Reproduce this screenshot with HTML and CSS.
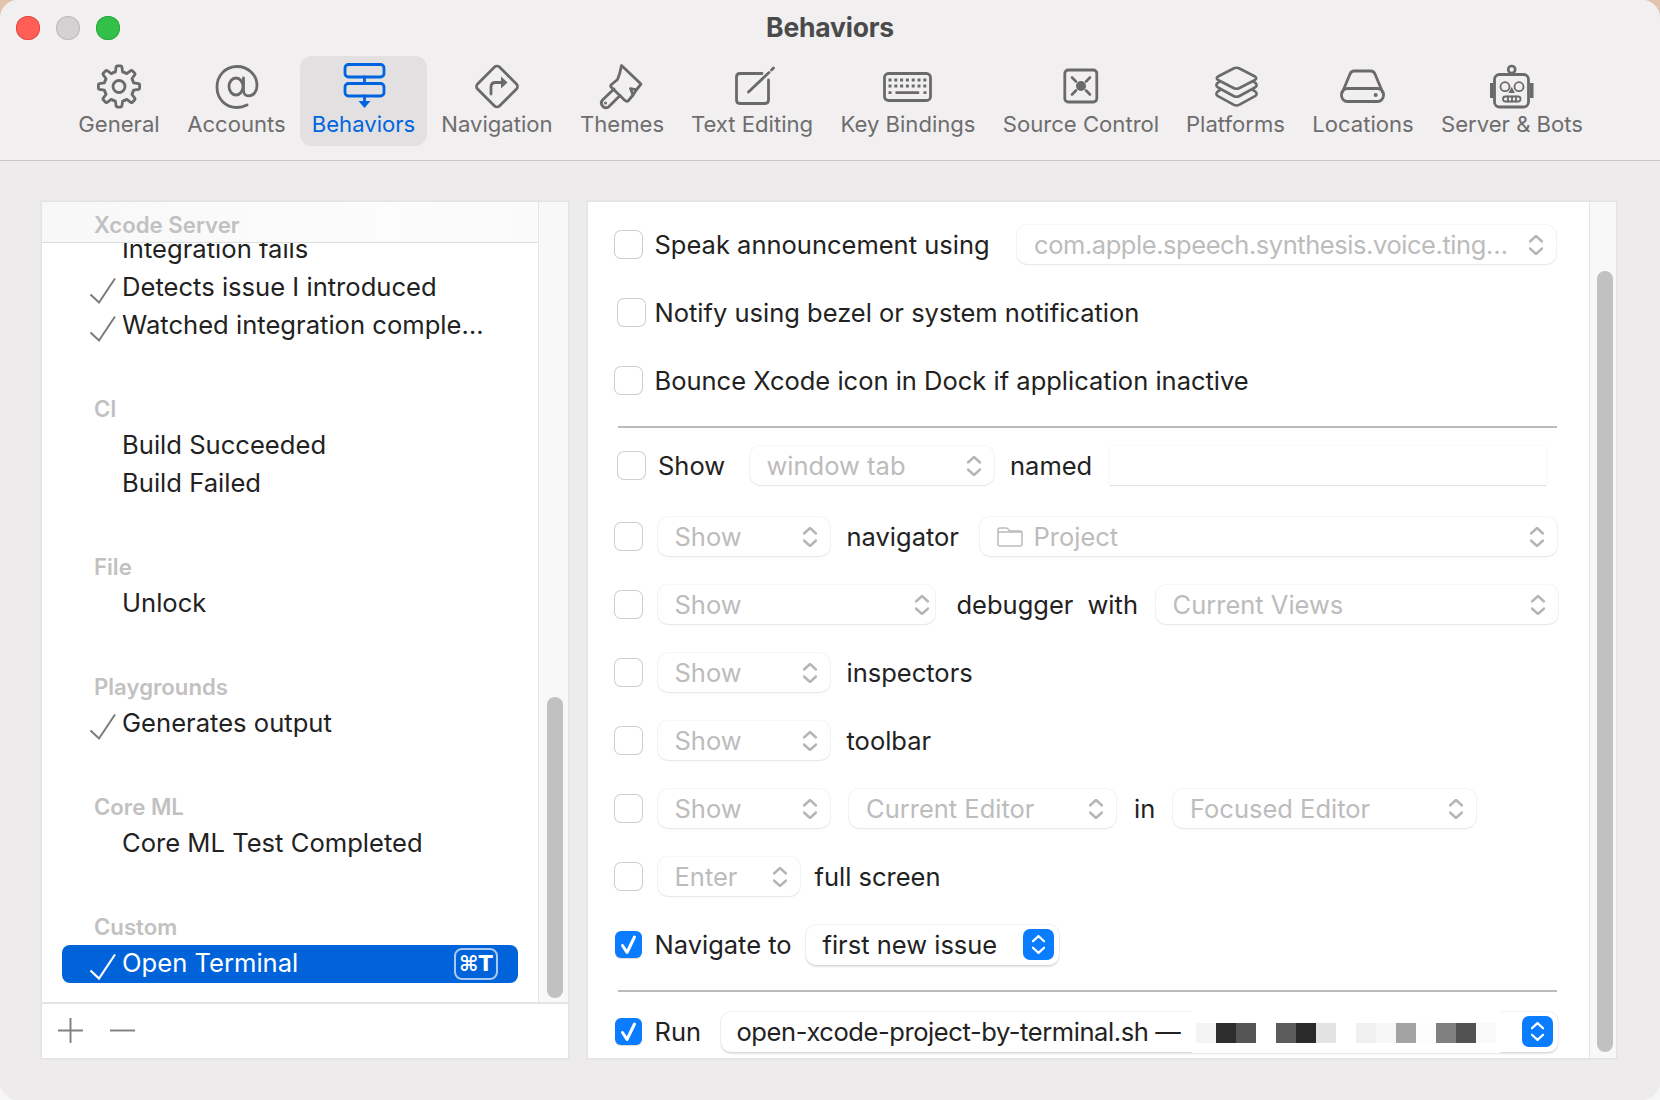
FILE: index.html
```html
<!DOCTYPE html>
<html lang="en">
<head>
<meta charset="utf-8">
<title>Behaviors</title>
<link rel="stylesheet" href="styles.css">
</head>
<body>
<svg class="defs" width="0" height="0" aria-hidden="true">
  <defs>
    <path id="tooth" d="M-5.74-13.86-3.6-14.6-2.9-19.6Q-2.7-20.6-1.7-20.6H1.7Q2.7-20.6 2.9-19.6L3.6-14.6 5.74-13.86"/>
    <path id="updown" d="M1 6.5 7 1l6 5.5M1 13.5 7 19l6-5.5"/>
    <path id="tick" d="M1.5 17.5 10 25.5 26 1.5"/>
    <path id="boxtick" d="M7.5 14.5 12 21.5 19.5 6"/>
  </defs>
</svg>
<div class="window">
  <header class="titlebar">
    <div class="lights"><span class="light red"></span><span class="light grey"></span><span class="light green"></span></div>
    <h1 class="title">Behaviors</h1>
    <div></div>
  </header>
  <nav class="toolbar">
    <a class="tool">
      <svg class="ticon" viewBox="0 0 60 50"><g transform="translate(30 24.5)"><use href="#tooth"/><use href="#tooth" transform="rotate(45)"/><use href="#tooth" transform="rotate(90)"/><use href="#tooth" transform="rotate(135)"/><use href="#tooth" transform="rotate(180)"/><use href="#tooth" transform="rotate(225)"/><use href="#tooth" transform="rotate(270)"/><use href="#tooth" transform="rotate(315)"/><circle r="6"/></g></svg>
      <span>General</span>
    </a>
    <a class="tool">
      <svg class="ticon" viewBox="0 0 60 50"><ellipse cx="29" cy="24.5" rx="7" ry="8.5"/><path d="M36.500 16v12.500c0 3.200 2 5.300 5 5.300 5 0 8.500-4 8.500-10.300C50 13 41 4.500 30 4.500 18 4.500 10 14 10 25c0 12 8.500 20.500 20 20.500 4 0 7-1 10-2.500"/></svg>
      <span>Accounts</span>
    </a>
    <a class="tool active">
      <svg class="ticon" viewBox="0 0 60 50"><rect x="11" y="2.500" width="39" height="12.500" rx="3.500"/><rect x="11" y="21.500" width="39" height="12.500" rx="3.500"/><path d="M30.500 15v6.500M30.500 34v5"/><path class="fill" d="M24.500 39h12l-6 7z"/></svg>
      <span>Behaviors</span>
    </a>
    <a class="tool">
      <svg class="ticon" viewBox="0 0 60 50"><rect x="14.500" y="9" width="31" height="31" rx="3.500" transform="rotate(45 30 24.500)"/><path d="M24 32v-7q0-4.500 4.500-4.500H35"/><path class="fill" d="M34 14.500 40.500 20.500 34 26.500z"/></svg>
      <span>Navigation</span>
    </a>
    <a class="tool">
      <svg class="ticon" viewBox="0 0 60 50"><path d="M29.500 3.500Q28 12 25.500 17.500L19.500 22.500Q18 24 19.500 25.500L33 38.500Q35 40 36.500 38.500L41 33Q44 28 49 22Z"/><path d="M22 27 10.500 38Q8 41 10.500 44 13 47 16.500 45L28 33.500"/><path d="M41 33 38.500 26.500 43.500 27.500"/><circle class="fill" cx="13.500" cy="41" r="1.500"/></svg>
      <span>Themes</span>
    </a>
    <a class="tool">
      <svg class="ticon" viewBox="0 0 60 50"><path d="M40 11.500H18q-3.500 0-3.500 3.500v23q0 3.500 3.500 3.500h25q3.500 0 3.500-3.500V18"/><path d="M26.500 30 47 10.500M49.500 8l2-2"/></svg>
      <span>Text Editing</span>
    </a>
    <a class="tool">
      <svg class="ticon" viewBox="0 0 60 50"><rect x="6.500" y="11.500" width="46" height="27" rx="4"/><path class="dash" d="M10.500 18H49M10.500 24H49"/><path class="dash" d="M10.500 30.700h3M45.500 30.700h3"/><path d="M18.700 30.700H40"/></svg>
      <span>Key Bindings</span>
    </a>
    <a class="tool">
      <svg class="ticon" viewBox="0 0 60 50"><rect x="13.800" y="8" width="32" height="32" rx="3.500"/><circle class="fill" cx="30" cy="24" r="5"/><path class="thin" d="M21 15.500l4 4M39 15.500l-4 4M21 32.500l4-4M39 32.500l-4-4"/></svg>
      <span>Source Control</span>
    </a>
    <a class="tool">
      <svg class="ticon" viewBox="0 0 60 50"><path class="thin" d="M27.500 6.500Q30.500 5 33.500 6.500L49 14.500Q51.500 16.300 49 18L33.500 26Q30.500 27.500 27.500 26L12 18Q9.500 16.300 12 14.500Z"/><path class="thin" d="M14 19.500 11.500 21Q9 23.500 12 25.500L27.500 34Q30.500 35.500 33.500 34L49 25.500Q52 23.500 49.500 21L47 19.500"/><path class="thin" d="M14 28.200 11.500 29.700Q9 32.200 12 34.200L27.500 42.700Q30.500 44.200 33.500 42.700L49 34.200Q52 32.200 49.500 29.700L47 28.200"/></svg>
      <span>Platforms</span>
    </a>
    <a class="tool">
      <svg class="ticon" viewBox="0 0 60 50"><rect x="8.500" y="26.500" width="42" height="13" rx="6"/><path d="M9.500 30 17 12Q18.500 9 21 9H38Q40.500 9 42 12L49.500 30"/><circle class="fill" cx="42.700" cy="33" r="2"/></svg>
      <span>Locations</span>
    </a>
    <a class="tool">
      <svg class="ticon" viewBox="0 0 60 50"><rect x="12.500" y="12.500" width="34" height="32.500" rx="5"/><circle class="thin" cx="29.700" cy="7.500" r="3.500"/><path class="fill" d="M8 21h3.500v15H8zM48 21h3.500v15H48zM29.700 25l3.300 6h-6.600z"/><circle class="fine" cx="23" cy="24.700" r="4.500"/><circle class="fine" cx="37" cy="24.700" r="4.500"/><rect class="fine" x="21" y="34.500" width="17.500" height="5" rx="2.500"/><path class="fine" d="M26 34.500v5M30 34.500v5M34 34.500v5"/></svg>
      <span>Server &amp; Bots</span>
    </a>
  </nav>
  <main class="content">
    <section class="panel left-panel">
      <div class="split">
        <div class="list-col">
          <div class="list-head">Xcode Server</div>
          <div class="list-scroll">
            <ul class="list">
              <li class="item"><span class="slot"></span>Integration fails</li>
              <li class="item"><span class="slot"><svg class="tick" viewBox="0 0 28 27"><use href="#tick"/></svg></span>Detects issue I introduced</li>
              <li class="item"><span class="slot"><svg class="tick" viewBox="0 0 28 27"><use href="#tick"/></svg></span>Watched integration comple…</li>
              <li class="group">CI</li>
              <li class="item"><span class="slot"></span>Build Succeeded</li>
              <li class="item"><span class="slot"></span>Build Failed</li>
              <li class="group">File</li>
              <li class="item"><span class="slot"></span>Unlock</li>
              <li class="group">Playgrounds</li>
              <li class="item"><span class="slot"><svg class="tick" viewBox="0 0 28 27"><use href="#tick"/></svg></span>Generates output</li>
              <li class="group">Core ML</li>
              <li class="item"><span class="slot"></span>Core ML Test Completed</li>
              <li class="group">Custom</li>
              <li class="item selected"><span class="slot"><svg class="tick" viewBox="0 0 28 27"><use href="#tick"/></svg></span>Open Terminal<span class="badge">⌘T</span></li>
            </ul>
          </div>
        </div>
        <div class="track"><div class="thumb thumb-list"></div></div>
      </div>
      <div class="list-foot">
        <svg class="foot-icon" viewBox="0 0 28 28"><path d="M14 1v26M1 14h26"/></svg>
        <svg class="foot-icon" viewBox="0 0 28 28"><path d="M1 14h26"/></svg>
      </div>
    </section>
    <section class="panel right-panel">
      <div class="form">
        <div class="row">
          <span class="cb"></span><span class="lbl">Speak announcement using</span>
          <span class="sel off s-end s-speak"><span class="val">com.apple.speech.synthesis.voice.ting…</span><svg class="updown" viewBox="0 0 14 20"><use href="#updown"/></svg></span>
        </div>
        <div class="row"><span class="cb cb-shift"></span><span class="lbl">Notify using bezel or system notification</span></div>
        <div class="row"><span class="cb"></span><span class="lbl">Bounce Xcode icon in Dock if application inactive</span></div>
        <hr class="rule">
        <div class="row row-show">
          <span class="cb cb-shift"></span><span class="lbl lbl-show">Show</span>
          <span class="sel off s-tab"><span class="val">window tab</span><svg class="updown" viewBox="0 0 14 20"><use href="#updown"/></svg></span>
          <span class="lbl lbl-named">named</span><span class="field"></span>
        </div>
        <div class="row">
          <span class="cb cb-sel"></span>
          <span class="sel off s-show"><span class="val">Show</span><svg class="updown" viewBox="0 0 14 20"><use href="#updown"/></svg></span>
          <span class="lbl after-sel lbl-nav">navigator</span>
          <span class="sel off s-end s-proj"><svg class="folder" viewBox="0 0 26 20"><path d="M1 5V3q0-2 2-2h6q1.500 0 2.500 1.500T14 4h9q2 0 2 2v11q0 2-2 2H3q-2 0-2-2V5h24"/></svg><span class="val">Project</span><svg class="updown" viewBox="0 0 14 20"><use href="#updown"/></svg></span>
        </div>
        <div class="row">
          <span class="cb cb-sel"></span>
          <span class="sel off s-debug"><span class="val">Show</span><svg class="updown" viewBox="0 0 14 20"><use href="#updown"/></svg></span>
          <span class="lbl lbl-debug">debugger</span><span class="lbl lbl-with">with</span>
          <span class="sel off s-end s-views"><span class="val">Current Views</span><svg class="updown" viewBox="0 0 14 20"><use href="#updown"/></svg></span>
        </div>
        <div class="row">
          <span class="cb cb-sel"></span>
          <span class="sel off s-show"><span class="val">Show</span><svg class="updown" viewBox="0 0 14 20"><use href="#updown"/></svg></span>
          <span class="lbl after-sel">inspectors</span>
        </div>
        <div class="row">
          <span class="cb cb-sel"></span>
          <span class="sel off s-show"><span class="val">Show</span><svg class="updown" viewBox="0 0 14 20"><use href="#updown"/></svg></span>
          <span class="lbl after-sel">toolbar</span>
        </div>
        <div class="row">
          <span class="cb cb-sel"></span>
          <span class="sel off s-show"><span class="val">Show</span><svg class="updown" viewBox="0 0 14 20"><use href="#updown"/></svg></span>
          <span class="sel off s-editor"><span class="val">Current Editor</span><svg class="updown" viewBox="0 0 14 20"><use href="#updown"/></svg></span>
          <span class="lbl lbl-in">in</span>
          <span class="sel off s-focus"><span class="val">Focused Editor</span><svg class="updown" viewBox="0 0 14 20"><use href="#updown"/></svg></span>
        </div>
        <div class="row">
          <span class="cb cb-sel"></span>
          <span class="sel off s-enter"><span class="val">Enter</span><svg class="updown" viewBox="0 0 14 20"><use href="#updown"/></svg></span>
          <span class="lbl lbl-full">full screen</span>
        </div>
        <div class="row">
          <span class="cb on"><svg class="boxtick" viewBox="0 0 27 27"><use href="#boxtick"/></svg></span><span class="lbl lbl-navto">Navigate to</span>
          <span class="sel s-navto"><span class="val">first new issue</span><span class="stepper"><svg class="updown" viewBox="0 0 14 20"><use href="#updown"/></svg></span></span>
        </div>
        <hr class="rule rule-run">
        <div class="row">
          <span class="cb on"><svg class="boxtick" viewBox="0 0 27 27"><use href="#boxtick"/></svg></span><span class="lbl lbl-run">Run</span>
          <span class="sel s-end s-run"><span class="val val-run">open-xcode-project-by-terminal.sh —</span>
            <span class="mosaic"><i class="p p-f4"></i><i class="p p-2e"></i><i class="p p-55"></i><i class="p"></i><i class="p p-5c"></i><i class="p p-2a"></i><i class="p p-e3"></i><i class="p"></i><i class="p p-f0"></i><i class="p p-f7"></i><i class="p p-a3"></i><i class="p p-fc"></i><i class="p p-80"></i><i class="p p-52"></i><i class="p p-f9"></i></span>
            <span class="stepper"><svg class="updown" viewBox="0 0 14 20"><use href="#updown"/></svg></span></span>
        </div>
      </div>
      <div class="track track-form"><div class="thumb thumb-form"></div></div>
    </section>
  </main>
</div>
</body>
</html>
```
FILE: styles.css
```css
* { box-sizing: border-box; }
html, body { margin: 0; height: 100%; }
body {
  width: 1660px; height: 1100px; overflow: hidden;
  background: linear-gradient(to bottom, #e2c3ad 0, #e2c3ad 40px, #f6f6f6 41px);
  font-family: Inter, "Noto Sans", "Liberation Sans", sans-serif;
  color: #222;
}
.defs { position: absolute; }
.window {
  width: 1660px; height: 1100px; background: #edebec;
  border-radius: 18px; overflow: hidden; display: flex; flex-direction: column;
}
.titlebar {
  height: 56px; background: #f1eff0;
  display: grid; grid-template-columns: 1fr auto 1fr; align-items: center;
}
.lights { display: flex; gap: 16px; padding: 0 0 0 16px; }
.light { width: 24px; height: 24px; border-radius: 50%; }
.red { background: #ff5f57; box-shadow: inset 0 0 0 1px #e5483f; }
.grey { background: #d3d1d2; box-shadow: inset 0 0 0 1px #bdbbbc; }
.green { background: #33c048; box-shadow: inset 0 0 0 1px #28a83c; }
.title { margin: 0; font-size: 26.500px; line-height: 30px; font-weight: 700; color: #4b4a4b; letter-spacing: -0.2px; position: relative; top: -1px; }

.toolbar {
  height: 105px; padding: 0 0 14px 65px; background: #f1eff0;
  border-bottom: 1.5px solid #c9c7c8;
  display: grid;
  grid-template-columns: 108px 127px 127px 140px 110px 150px 162px 184px 125px 130px 168px;
}
.tool {
  display: flex; flex-direction: column; align-items: center;
  border-radius: 12px; color: #6e6d6e; padding-top: 6px;
  font-size: 22.100px; line-height: 26px;
}
.tool span { white-space: nowrap; margin-top: -1px; }
.ticon { width: 60px; height: 50px; fill: none; stroke: #6b6a6b; stroke-width: 2.800; stroke-linejoin: round; stroke-linecap: round; }
.ticon .fill { fill: #6b6a6b; stroke: none; }
.ticon .thin { stroke-width: 2.600; }
.ticon .fine { stroke-width: 1.800; }
.ticon .dash { stroke-dasharray: 3 2.800; stroke-linecap: butt; }
.tool.active { background: #e2e0e1; color: #0064e1; }
.active .ticon { stroke: #0064e1; }
.active .ticon .fill { fill: #0064e1; }

.content { flex: 1; display: flex; gap: 19.500px; padding: 40.500px 0 0 42px; height: 939px; }
.panel { background: #fff; box-shadow: 0 0 0 1.500px #e4e3e3; height: 856px; overflow: hidden; }
.left-panel { width: 526px; display: flex; flex-direction: column; }
.split { display: flex; height: 800px; flex: none; }
.list-col { width: 496px; display: flex; flex-direction: column; }
.list-head {
  height: 41px; flex: none; padding: 10px 0 0 52px;
  font-size: 22.200px; line-height: 26px; font-weight: 600; color: #c2c1c1;
  background: linear-gradient(to right, #f8f8f8, #fcfcfc 70%, #fafafa);
  border-bottom: 1.500px solid #dedede;
  position: relative; z-index: 1;
}
.list-scroll { flex: 1; overflow: hidden; }
.list { list-style: none; margin: -12px 0 0; padding: 0 20px; }
.item {
  height: 38px; display: flex; align-items: center; position: relative; padding-bottom: 2px;
  font-size: 25.600px; line-height: 36px; color: #222; border-radius: 8px; white-space: nowrap;
}
.slot { width: 60px; flex: none; display: flex; }
.tick { width: 28px; height: 27px; margin: 8px 0 0 27px; fill: none; stroke: #7c7c7c; stroke-width: 2; flex: none; overflow: visible; }
.group { height: 36px; margin-top: 46px; padding-left: 32px; font-size: 22.200px; line-height: 36px; font-weight: 600; color: #c2c1c1; }
.selected { background: #0063d9; color: #fff; }
.selected .tick { stroke: #fff; stroke-width: 2.200; }
.badge {
  margin-left: auto; margin-right: 20px; width: 44px; height: 32px; flex: none;
  border: 2px solid rgba(255,255,255,.65); border-radius: 8px; position: relative; top: 1px;
  font-family: "DejaVu Sans", Inter, sans-serif; font-size: 21px; line-height: 28px; font-weight: 700; text-align: center;
}
.track { flex: 1; background: #f8f8f8; border-left: 1.500px solid #e5e5e5; padding-left: 8px; }
.thumb { width: 15.500px; background: #c1c1c1; border-radius: 8px; }
.thumb-list { margin-top: 495px; height: 301px; }
.list-foot { flex: 1; border-top: 2px solid #e5e4e4; display: flex; align-items: center; gap: 25px; padding: 0 0 0 15px; }
.foot-icon { width: 27px; height: 27px; fill: none; stroke: #818181; stroke-width: 2; }

.right-panel { width: 1028px; display: flex; }
.form { width: 1001.500px; flex: none; padding: 23px 33px 0 27px; }
.row { display: flex; align-items: center; height: 40px; margin-bottom: 28px; font-size: 25.500px; white-space: nowrap; }
.row-show { margin-bottom: 31px; }
.cb {
  width: 27px; height: 27px; flex: none; border-radius: 6px; background: #fff;
  box-shadow: 0 0 0 1px #d0cfcf, 0 1px 1px rgba(0,0,0,.06); margin-right: 13px;
}
.cb-shift { margin-left: 3px; margin-right: 10px; }
.cb-sel { margin-right: 16px; }
.cb.on { background: #0a7cff; box-shadow: 0 1px 1px rgba(0,0,0,.15); }
.boxtick { display: block; width: 27px; height: 27px; fill: none; stroke: #fff; stroke-width: 3; stroke-linecap: round; stroke-linejoin: round; }
.lbl { color: #222; flex: none; }
.lbl-show { margin-left: 3.500px; width: 91.500px; }
.lbl-named { width: 100px; margin-left: 16.500px; }
.lbl-nav { width: 133px; }
.lbl-debug { width: 131px; margin-left: 22px; }
.lbl-with { width: 68px; }
.after-sel { margin-left: 17px; }
.lbl-in { margin-left: 18px; width: 39px; }
.lbl-full { margin-left: 15px; }
.lbl-run { width: 66px; }
.lbl-navto { width: 151px; }
.sel {
  height: 40px; flex: none; display: flex; align-items: center; position: relative;
  background: #fff; border-radius: 10px; padding-left: 17px;
  box-shadow: 0 0 0 1px rgba(0,0,0,.045), 0 1.500px 2px rgba(0,0,0,.11);
}
.sel.off { box-shadow: 0 0 0 1px rgba(0,0,0,.035), 0 1px 2px rgba(0,0,0,.07); height: 39px; }
.sel.off .val { color: #bdbcbc; }
.val { color: #222; }
.updown { width: 14px; height: 20px; fill: none; stroke: #b5b5b5; stroke-width: 2.400; stroke-linecap: round; stroke-linejoin: round; margin-left: auto; margin-right: 13px; flex: none; }
.s-end { margin-left: auto; }
.s-speak { width: 539px; }
.s-speak .val { letter-spacing: -0.44px; }
.s-tab { width: 244px; }
.s-show { width: 172px; }
.s-proj { width: 577px; }
.s-debug { width: 277px; }
.s-debug .updown { margin-right: 6px; }
.s-views { width: 402px; }
.s-editor { width: 267px; margin-left: 19.500px; }
.s-focus { width: 303px; }
.s-enter { width: 142px; }
.s-navto { width: 253px; }
.s-run { width: 837px; padding-left: 16px; }
.folder { width: 26px; height: 20px; margin-right: 11px; fill: none; stroke: #bdbcbc; stroke-width: 1.500; flex: none; }
.field { width: 436px; height: 39px; background: #fff; box-shadow: 0 0 0 1px rgba(0,0,0,.018), 0 1px 1px rgba(0,0,0,.09); flex: none; }
.stepper {
  width: 31px; height: 31px; margin-left: auto; margin-right: 5px; flex: none; border-radius: 7px; background: #0a7cff;
  display: flex; align-items: center; justify-content: center;
}
.stepper .updown { stroke: #fff; margin: 0; width: 13px; height: 19px; }
.rule { border: 0; height: 2px; background: #bcbbbb; margin: -3px 30px 18px 3px; width: 939.500px; }
.rule-run { margin-bottom: 20px; }
.val-run { flex: none; width: 445px; letter-spacing: -0.42px; }
.mosaic { display: flex; align-items: center; height: 42px; background: #fff; margin-left: 10px; padding: 0 4px; flex: none; }
.p { display: block; width: 20px; height: 20px; background: #fff; position: relative; top: 1px; }
.p-f4 { background: #f4f4f4; }
.p-2e { background: #2e2e2e; }
.p-55 { background: #555; }
.p-5c { background: #5c5c5c; }
.p-2a { background: #2a2a2a; }
.p-e3 { background: #e3e3e3; }
.p-f0 { background: #f0f0f0; }
.p-f7 { background: #f7f7f7; }
.p-a3 { background: #a3a3a3; }
.p-fc { background: #fcfcfc; }
.p-80 { background: #808080; }
.p-52 { background: #525252; }
.p-f9 { background: #f9f9f9; }
.track-form { padding-left: 7px; }
.thumb-form { margin-top: 69px; height: 781px; }
```
